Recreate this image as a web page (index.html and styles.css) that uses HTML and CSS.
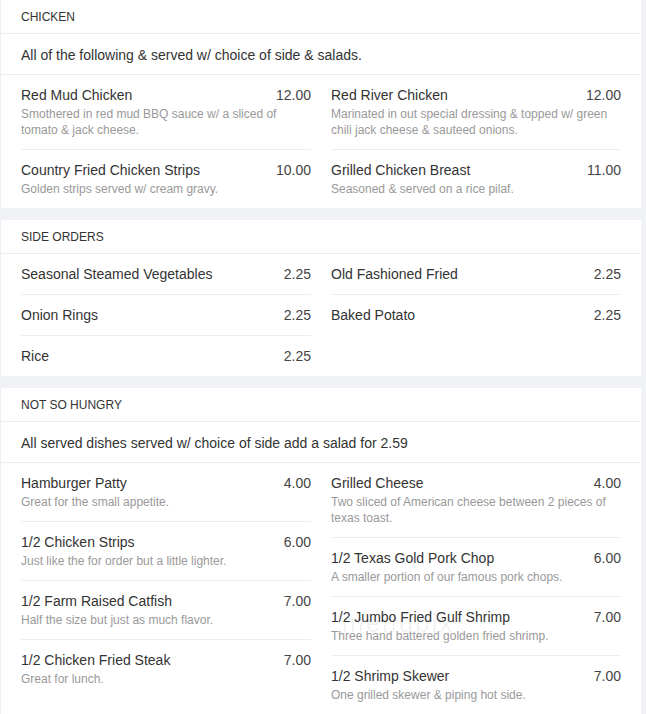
FILE: index.html
```html
<!DOCTYPE html>
<html>
<head>
<meta charset="utf-8">
<link rel="stylesheet" href="styles.css">
</head>
<body>
<div class="page">
  <section class="card">
    <div class="card-head">CHICKEN</div>
    <div class="card-note">All of the following &amp; served w/ choice of side &amp; salads.</div>
    <div class="cols">
      <div class="col">
        <div class="item">
          <div class="line"><span class="name">Red Mud Chicken</span><span class="price">12.00</span></div>
          <div class="desc">Smothered in red mud BBQ sauce w/ a sliced of tomato &amp; jack cheese.</div>
        </div>
        <div class="item">
          <div class="line"><span class="name">Country Fried Chicken Strips</span><span class="price">10.00</span></div>
          <div class="desc">Golden strips served w/ cream gravy.</div>
        </div>
      </div>
      <div class="col">
        <div class="item">
          <div class="line"><span class="name">Red River Chicken</span><span class="price">12.00</span></div>
          <div class="desc">Marinated in out special dressing &amp; topped w/ green chili jack cheese &amp; sauteed onions.</div>
        </div>
        <div class="item">
          <div class="line"><span class="name">Grilled Chicken Breast</span><span class="price">11.00</span></div>
          <div class="desc">Seasoned &amp; served on a rice pilaf.</div>
        </div>
      </div>
    </div>
  </section>

  <section class="card">
    <div class="card-head">SIDE ORDERS</div>
    <div class="cols">
      <div class="col">
        <div class="item simple">
          <div class="line"><span class="name">Seasonal Steamed Vegetables</span><span class="price">2.25</span></div>
        </div>
        <div class="item simple">
          <div class="line"><span class="name">Onion Rings</span><span class="price">2.25</span></div>
        </div>
        <div class="item simple">
          <div class="line"><span class="name">Rice</span><span class="price">2.25</span></div>
        </div>
      </div>
      <div class="col">
        <div class="item simple">
          <div class="line"><span class="name">Old Fashioned Fried</span><span class="price">2.25</span></div>
        </div>
        <div class="item simple">
          <div class="line"><span class="name">Baked Potato</span><span class="price">2.25</span></div>
        </div>
      </div>
    </div>
  </section>

  <section class="card">
    <div class="card-head">NOT SO HUNGRY</div>
    <div class="card-note">All served dishes served w/ choice of side add a salad for 2.59</div>
    <div class="cols">
      <div class="col">
        <div class="item">
          <div class="line"><span class="name">Hamburger Patty</span><span class="price">4.00</span></div>
          <div class="desc">Great for the small appetite.</div>
        </div>
        <div class="item">
          <div class="line"><span class="name">1/2 Chicken Strips</span><span class="price">6.00</span></div>
          <div class="desc">Just like the for order but a little lighter.</div>
        </div>
        <div class="item">
          <div class="line"><span class="name">1/2 Farm Raised Catfish</span><span class="price">7.00</span></div>
          <div class="desc">Half the size but just as much flavor.</div>
        </div>
        <div class="item">
          <div class="line"><span class="name">1/2 Chicken Fried Steak</span><span class="price">7.00</span></div>
          <div class="desc">Great for lunch.</div>
        </div>
      </div>
      <div class="col">
        <div class="item">
          <div class="line"><span class="name">Grilled Cheese</span><span class="price">4.00</span></div>
          <div class="desc">Two sliced of American cheese between 2 pieces of texas toast.</div>
        </div>
        <div class="item">
          <div class="line"><span class="name">1/2 Texas Gold Pork Chop</span><span class="price">6.00</span></div>
          <div class="desc">A smaller portion of our famous pork chops.</div>
        </div>
        <div class="item">
          <div class="line"><span class="name">1/2 Jumbo Fried Gulf Shrimp</span><span class="price">7.00</span></div>
          <div class="desc">Three hand battered golden fried shrimp.</div>
        </div>
        <div class="item">
          <div class="line"><span class="name">1/2 Shrimp Skewer</span><span class="price">7.00</span></div>
          <div class="desc">One grilled skewer &amp; piping hot side.</div>
        </div>
      </div>
    </div>
    <div class="watermark">menupix</div>
  </section>
</div>
</body>
</html>
```

FILE: styles.css
```css
html, body {
  margin: 0;
  padding: 0;
}
body {
  background: #f1f2f5;
  font-family: "Liberation Sans", Arial, sans-serif;
  color: #333;
}
.page {
  width: 641px;
  display: flex;
  flex-direction: column;
  gap: 12px;
}
.card {
  position: relative;
  background: #fff;
  border-left: 1px solid #eceef0;
}
.card-head {
  padding: 9px 20px 7px;
  font-size: 12px;
  line-height: 17px;
  color: #333;
  border-bottom: 1px solid #eceef0;
}
.card-note {
  padding: 11px 20px 9px;
  font-size: 14px;
  line-height: 20px;
  color: #333;
  border-bottom: 1px solid #eceef0;
}
.cols {
  display: flex;
  gap: 20px;
  padding: 0 20px;
  align-items: flex-start;
}
.col {
  flex: 0 0 290px;
  display: flex;
  flex-direction: column;
}
.item {
  padding: 10px 0 11px;
  border-bottom: 1px solid #eceef0;
}
.item:last-child {
  border-bottom: none;
}
.item.simple {
  padding: 10px 0;
}
.line {
  display: flex;
  justify-content: space-between;
  font-size: 14px;
  line-height: 20px;
}
.name {
  color: #333;
}
.price {
  color: #444;
}
.desc {
  margin-top: 1px;
  font-size: 12px;
  line-height: 16px;
  color: #999;
}
.watermark {
  position: absolute;
  left: 341px;
  top: 220px;
  font-size: 26px;
  letter-spacing: 2px;
  color: rgba(0, 0, 0, 0.06);
  pointer-events: none;
}
```
